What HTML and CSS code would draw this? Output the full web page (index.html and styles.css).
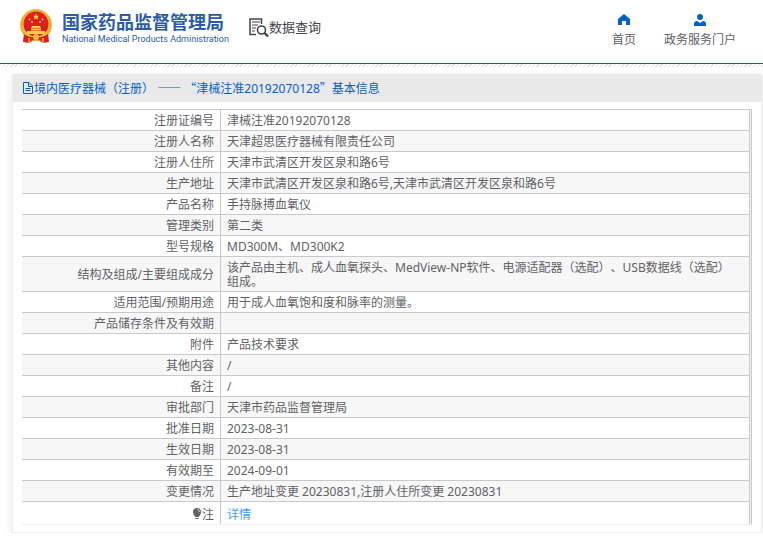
FILE: index.html
```
<!DOCTYPE html>
<html lang="zh-CN">
<head>
<meta charset="utf-8">
<title>数据查询 - 国家药品监督管理局</title>
<link rel="stylesheet" href="styles.css">
</head>
<body>
<header class="site-header">
  <div class="brand">
    <svg class="emblem" viewBox="0 0 32 34" aria-hidden="true">
      <path d="M4 24 L3 33 L9 34 L12 32 H20 L23 34 L29 33 L28 24Z" fill="#d8201f"/>
      <circle cx="16" cy="16" r="16" fill="#f2bd3b"/>
      <circle cx="16" cy="16" r="14.5" fill="none" stroke="#dc9420" stroke-width="1" stroke-dasharray="2 1"/>
      <circle cx="16" cy="15" r="12.5" fill="#dc1f1c"/>
      <path d="M16 4.500l.9 2.300h2.400l-1.900 1.500.7 2.400-2.100-1.400-2.100 1.400.7-2.400-1.900-1.500h2.400z" fill="#ffd34a"/>
      <g fill="#ffd34a"><circle cx="9.500" cy="10.500" r=".9"/><circle cx="12" cy="13" r=".9"/><circle cx="20" cy="13" r=".9"/><circle cx="22.500" cy="10.500" r=".9"/></g>
      <path d="M12 17h8l1 2h-10zM11 19.500h10v2h-10zM7 22h18v3H7z" fill="#ffcf45"/>
      <path d="M4 25 Q10 30 16 27 Q22 30 28 25 L27 30 Q21 32 16 30 Q11 32 5 30Z" fill="#d8201f"/>
      <circle cx="16" cy="28" r="3" fill="#f5bd36"/>
      <path d="M9 29v5M23 29v5" stroke="#f5b32e" stroke-width="1.500"/>
    </svg>
    <div class="brand-text">
      <span class="brand-cn">国家药品监督管理局</span>
      <span class="brand-en">National Medical Products Administration</span>
    </div>
  </div>
  <div class="section-name">
    <svg class="search-icon" viewBox="0 0 20 20" fill="none" stroke="#41434b" aria-hidden="true">
      <path d="M12.500 6V1H1v15.500h6" stroke-width="1.500"/>
      <path d="M3 4h8M3 7h6M3 10h4M3 13h3" stroke-width="1"/>
      <circle cx="12.500" cy="12" r="4" stroke-width="1.600"/>
      <path d="M15.500 15l3.500 3.500" stroke-width="2.400"/>
    </svg>
    <span>数据查询</span>
  </div>
  <nav class="site-nav">
    <a href="#home">
      <svg viewBox="0 0 12 12" aria-hidden="true"><path d="M6 0 0 5v6h4V7h4v4h4V5z" fill="#0560c4"/></svg>
      首页
    </a>
    <a href="#portal">
      <svg viewBox="0 0 12 12" aria-hidden="true"><circle cx="6" cy="3" r="3" fill="#0560c4"/><path d="M0 12V9.500Q0 7.500 3 7l3 2 3-2q3 .5 3 2.500V12z" fill="#0560c4"/></svg>
      政务服务门户
    </a>
  </nav>
</header>
<div class="hatch"></div>
<main class="card">
  <h1 class="card-title">
    <svg viewBox="0 0 12 12" fill="none" stroke="#0560c4" aria-hidden="true"><path d="M1.500 .5h5.500l3.500 3.500v7.500h-9zM6.500 .5v4h4M3.500 6.500h5M3.500 8.500h5"/></svg>
    <span>境内医疗器械（注册） <span class="wide dash">——</span> <span class="wide">“</span>津械注准20192070128<span class="wide">”</span>基本信息</span>
  </h1>
  <div class="table-wrap">
    <table class="details">
      <tbody>
        <tr><th scope="row">注册证编号</th><td>津械注准20192070128</td></tr>
        <tr><th scope="row">注册人名称</th><td>天津超思医疗器械有限责任公司</td></tr>
        <tr><th scope="row">注册人住所</th><td>天津市武清区开发区泉和路6号</td></tr>
        <tr><th scope="row">生产地址</th><td>天津市武清区开发区泉和路6号,天津市武清区开发区泉和路6号</td></tr>
        <tr><th scope="row">产品名称</th><td>手持脉搏血氧仪</td></tr>
        <tr><th scope="row">管理类别</th><td>第二类</td></tr>
        <tr><th scope="row">型号规格</th><td>MD300M、MD300K2</td></tr>
        <tr><th scope="row">结构及组成/主要组成成分</th><td>该产品由主机、成人血氧探头、MedView-NP软件、电源适配器（选配）、USB数据线（选配）组成。</td></tr>
        <tr><th scope="row">适用范围/预期用途</th><td>用于成人血氧饱和度和脉率的测量。</td></tr>
        <tr><th scope="row">产品储存条件及有效期</th><td></td></tr>
        <tr><th scope="row">附件</th><td>产品技术要求</td></tr>
        <tr><th scope="row">其他内容</th><td>/</td></tr>
        <tr><th scope="row">备注</th><td>/</td></tr>
        <tr><th scope="row">审批部门</th><td>天津市药品监督管理局</td></tr>
        <tr><th scope="row">批准日期</th><td>2023-08-31</td></tr>
        <tr><th scope="row">生效日期</th><td>2023-08-31</td></tr>
        <tr><th scope="row">有效期至</th><td>2024-09-01</td></tr>
        <tr><th scope="row">变更情况</th><td>生产地址变更 20230831,注册人住所变更 20230831</td></tr>
        <tr class="note"><th scope="row"><svg viewBox="0 0 10 12" aria-hidden="true"><path d="M5 0a4 4 0 0 1 4 4c0 2-1.500 4-2.500 5h-3C2.500 8 1 6 1 4a4 4 0 0 1 4-4zM3.500 10h3v1h-3z" fill="#606266"/><path d="M5.500 1.500Q7.500 2 7.500 4" stroke="#fff" stroke-width=".8" fill="none"/></svg>注</th><td><a href="#details">详情</a></td></tr>
      </tbody>
    </table>
  </div>
</main>
</body>
</html>
```
FILE: styles.css
```
* { box-sizing: border-box; }
body {
  margin: 0;
  background: #fff;
  color: #606266;
  font: 12px/14px "Noto Sans", "Noto Sans CJK SC", sans-serif;
  text-spacing-trim: space-all;
}
a { color: inherit; text-decoration: none; }
svg { display: block; flex: none; }

.site-header {
  display: flex;
  align-items: flex-start;
  height: 64px;
  padding: 0 27px 0 20px;
  border-bottom: 1px solid #0560c4;
}
.brand { display: flex; gap: 10px; padding-top: 9px; }
.emblem { width: 32px; height: 34px; }
.brand-text { display: flex; flex-direction: column; padding-top: 3px; white-space: nowrap; }
.brand-cn { color: #2c5ba9; font-size: 18px; line-height: 20px; font-weight: 700; }
.brand-en { color: #2c5ba9; font: 400 9px/14px Roboto, sans-serif; }
.section-name {
  display: flex;
  margin-left: 20px;
  padding-top: 18px;
  color: #41434b;
  font-size: 13px;
  line-height: 18px;
}
.search-icon { width: 20px; height: 20px; }
.site-nav { display: flex; gap: 28px; margin-left: auto; padding-top: 14px; }
.site-nav a {
  display: flex;
  flex-direction: column;
  align-items: center;
  gap: 7px;
}
.site-nav svg { width: 12px; height: 12px; }

.hatch {
  height: 3px;
  background: repeating-linear-gradient(135deg, #e0e0e0 0 1px, #fff 1px 3px);
}

.card {
  margin: 7px 1px 0 12px;
  padding-bottom: 7px;
  border: 1px solid #ebeef5;
  border-top: 0;
  box-shadow: 0 2px 8px rgba(0, 0, 0, 0.1);
}
.card-title {
  display: flex;
  align-items: center;
  height: 28px;
  margin: 0;
  padding: 0 9px;
  background: #e9e9e9;
  color: #0560c4;
  font-size: 12px;
  font-weight: 400;
  line-height: 28px;
}
.card-title svg { width: 12px; height: 12px; }
.wide { font-family: "Noto Sans CJK SC", sans-serif; }
.dash { font-weight: 700; }

.table-wrap {
  margin: 7px 9px 0;
  padding-right: 1px;
  border-right: 1px solid #c8c9cc;
  border-bottom: 1px solid #ebeef5;
  background: #f0f0f5;
}
.details {
  width: 100%;
  border-spacing: 0;
  table-layout: fixed;
}
.details th, .details td {
  padding: 4px 6px 2px;
  border-top: 1px solid #c8c9cc;
  border-right: 1px solid #c8c9cc;
  background: #fff;
}
.details th { width: 199px; text-align: right; font-weight: 400; }
.details td { height: 21px; padding-right: 12px; }
.details tr:nth-child(even) > * { background: #f7f7f7; }
.details .note > * { padding-top: 6px; }
.note svg { display: inline-block; width: 10px; height: 12px; vertical-align: -1px; }
.note a { color: #409eff; }
```
